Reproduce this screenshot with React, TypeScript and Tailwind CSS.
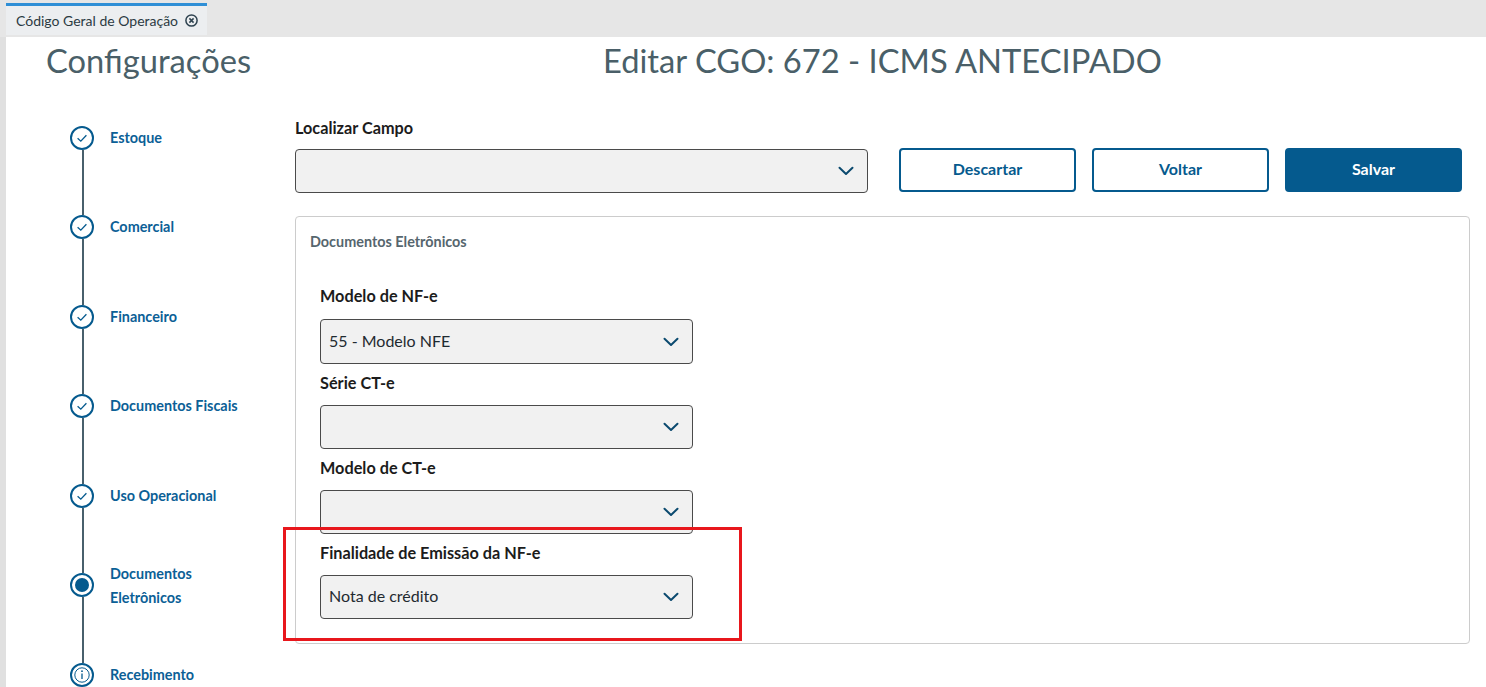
const BLUE = "#055a8e";

function Chevron({ size = 16 }: { size?: number }) {
  return (
    <svg width={size} height={size} viewBox="0 0 16 16" fill="none" stroke="#0b4a6f" strokeWidth="2" strokeLinecap="round" strokeLinejoin="round">
      <path d="M1.5 4.8 8 11 14.5 4.8" />
    </svg>
  );
}

function StepIcon({ kind }: { kind: "done" | "current" | "info" }) {
  return (
    <svg width="24" height="24" viewBox="0 0 24 24" fill="none" className="shrink-0">
      <circle cx="12" cy="12" r="11" fill="#fff" stroke={BLUE} strokeWidth="2" />
      {kind === "done" && <path d="M7.6 12.2 10.8 15.2 16.4 9.2" stroke={BLUE} strokeWidth="1.3" />}
      {kind === "current" && <circle cx="12" cy="12" r="7" fill={BLUE} />}
      {kind === "info" && (
        <>
          <circle cx="12" cy="12" r="7.2" stroke={BLUE} strokeWidth="1" />
          <path d="M12 10.5V16" stroke={BLUE} strokeWidth="1.3" />
          <circle cx="12" cy="8.2" r="0.9" fill={BLUE} />
        </>
      )}
    </svg>
  );
}

function Step({ label, kind, last }: { label: string[]; kind: "done" | "current" | "info"; last?: boolean }) {
  return (
    <div className="flex h-[89.5px] shrink-0">
      <div className="flex w-[24px] flex-col items-center">
        <StepIcon kind={kind} />
        {!last && <div className="ml-[2px] w-[2px] flex-1 bg-[#48606c]" />}
      </div>
      <div className="ml-[16px] text-[14.4px] leading-[24px] font-bold text-[#0b6096]">
        {label.length > 1 ? (
          <div className="-mt-[11.5px]">
            <div>{label[0]}</div>
            <div>{label[1]}</div>
          </div>
        ) : (
          label[0]
        )}
      </div>
    </div>
  );
}

function Select({ value, wide, className = "" }: { value?: string; wide?: boolean; className?: string }) {
  return (
    <div
      className={`flex h-[44px] items-center justify-between rounded-[4px] border border-[#4a4a4a] bg-[#f1f1f1] pl-[8px] pr-[13px] ${wide ? "w-[573px]" : "w-[373px]"} ${className}`}
    >
      <span className="-mt-[2px] text-[16px] text-[#1f2a30]">{value}</span>
      <Chevron />
    </div>
  );
}

function Field({ label, value, first }: { label: string; value?: string; first?: boolean }) {
  return (
    <div className="flex flex-col">
      <div className={`${first ? "mb-[11px]" : "mb-[10px]"} -mt-[1px] h-[24px] text-[16.25px] leading-[24px] font-bold text-[#1c1c1c]`}>{label}</div>
      <Select value={value} className={first ? "!h-[45px]" : ""} />
    </div>
  );
}

function Button({ children, primary }: { children: string; primary?: boolean }) {
  return (
    <div
      className={`flex h-[44px] w-[177px] items-center justify-center rounded-[4px] border-2 border-[#055a8e] pb-[2px] text-[16px] font-bold ${primary ? "bg-[#055a8e] text-white" : "bg-white text-[#055a8e]"}`}
    >
      {children}
    </div>
  );
}

export default function App() {
  return (
    <div className="relative flex h-[687px] w-[1486px] flex-col overflow-hidden bg-white font-['Lato','Noto_Sans',sans-serif]">
      <div className="flex h-[37px] shrink-0 items-end bg-[#e6e6e6] pl-[6px]">
        <div className="mb-[2px] flex h-[32px] w-[201px] items-center gap-[7px] border-t-[3px] border-[#2f8fd6] bg-[#eceef0] pb-[1px] pl-[10px]">
          <span className="text-[14px] text-[#2b3a42]">Código Geral de Operação</span>
          <svg width="13" height="13" viewBox="0 0 13 13" fill="none" stroke="#2f4350" strokeWidth="1.5">
            <circle cx="6.5" cy="6.5" r="5.6" />
            <path d="M4.4 4.4 8.6 8.6M8.6 4.4 4.4 8.6" />
          </svg>
        </div>
      </div>

      <div className="flex min-h-0 flex-1">
        <div className="w-[6px] shrink-0 bg-[#e0e0e0]" />
        <div className="flex min-w-0 flex-1 flex-col">
          <div className="-mt-[1px] flex h-[50px] shrink-0 items-center">
            <div className="ml-[40px] w-[557px] shrink-0 text-[32.7px] leading-[48px] text-[#4a5f68]">Configurações</div>
            <div className="text-[32.7px] leading-[48px] whitespace-nowrap text-[#4a5f68]">Editar CGO: 672 - ICMS ANTECIPADO</div>
          </div>

          <div className="flex min-h-0 flex-1">
            <div className="ml-[64px] flex w-[225px] shrink-0 flex-col pt-[39.7px]">
              <Step label={["Estoque"]} kind="done" />
              <Step label={["Comercial"]} kind="done" />
              <Step label={["Financeiro"]} kind="done" />
              <Step label={["Documentos Fiscais"]} kind="done" />
              <Step label={["Uso Operacional"]} kind="done" />
              <Step label={["Documentos", "Eletrônicos"]} kind="current" />
              <Step label={["Recebimento"]} kind="info" last />
            </div>

            <div className="w-[1175px] shrink-0 pt-[31px]">
              <div className="flex items-start">
                <div className="w-[573px]">
                  <div className="mb-[9px] -mt-[1px] h-[24px] text-[16.25px] leading-[24px] font-bold text-[#1c1c1c]">Localizar Campo</div>
                  <Select wide />
                </div>
                <div className="mt-[31px] ml-[31px] flex gap-[16px]">
                  <Button>Descartar</Button>
                  <Button>Voltar</Button>
                  <Button primary>Salvar</Button>
                </div>
              </div>

              <div className="mt-[23px] h-[428px] rounded-[4px] border border-[#cccccc] pt-[15px] pl-[14px]">
                <div className="text-[14.4px] leading-[20px] font-bold text-[#56666e]">Documentos Eletrônicos</div>
                <div className="mt-[33px] ml-[10px] flex flex-col gap-[8px]">
                  <Field label="Modelo de NF-e" value="55 - Modelo NFE" first />
                  <Field label="Série CT-e" />
                  <Field label="Modelo de CT-e" />
                  <Field label="Finalidade de Emissão da NF-e" value="Nota de crédito" />
                </div>
              </div>
            </div>
          </div>
        </div>
      </div>

      <div className="pointer-events-none absolute top-[527px] left-[283px] h-[114px] w-[459px] border-[3px] border-[#e8171c]" />
    </div>
  );
}
